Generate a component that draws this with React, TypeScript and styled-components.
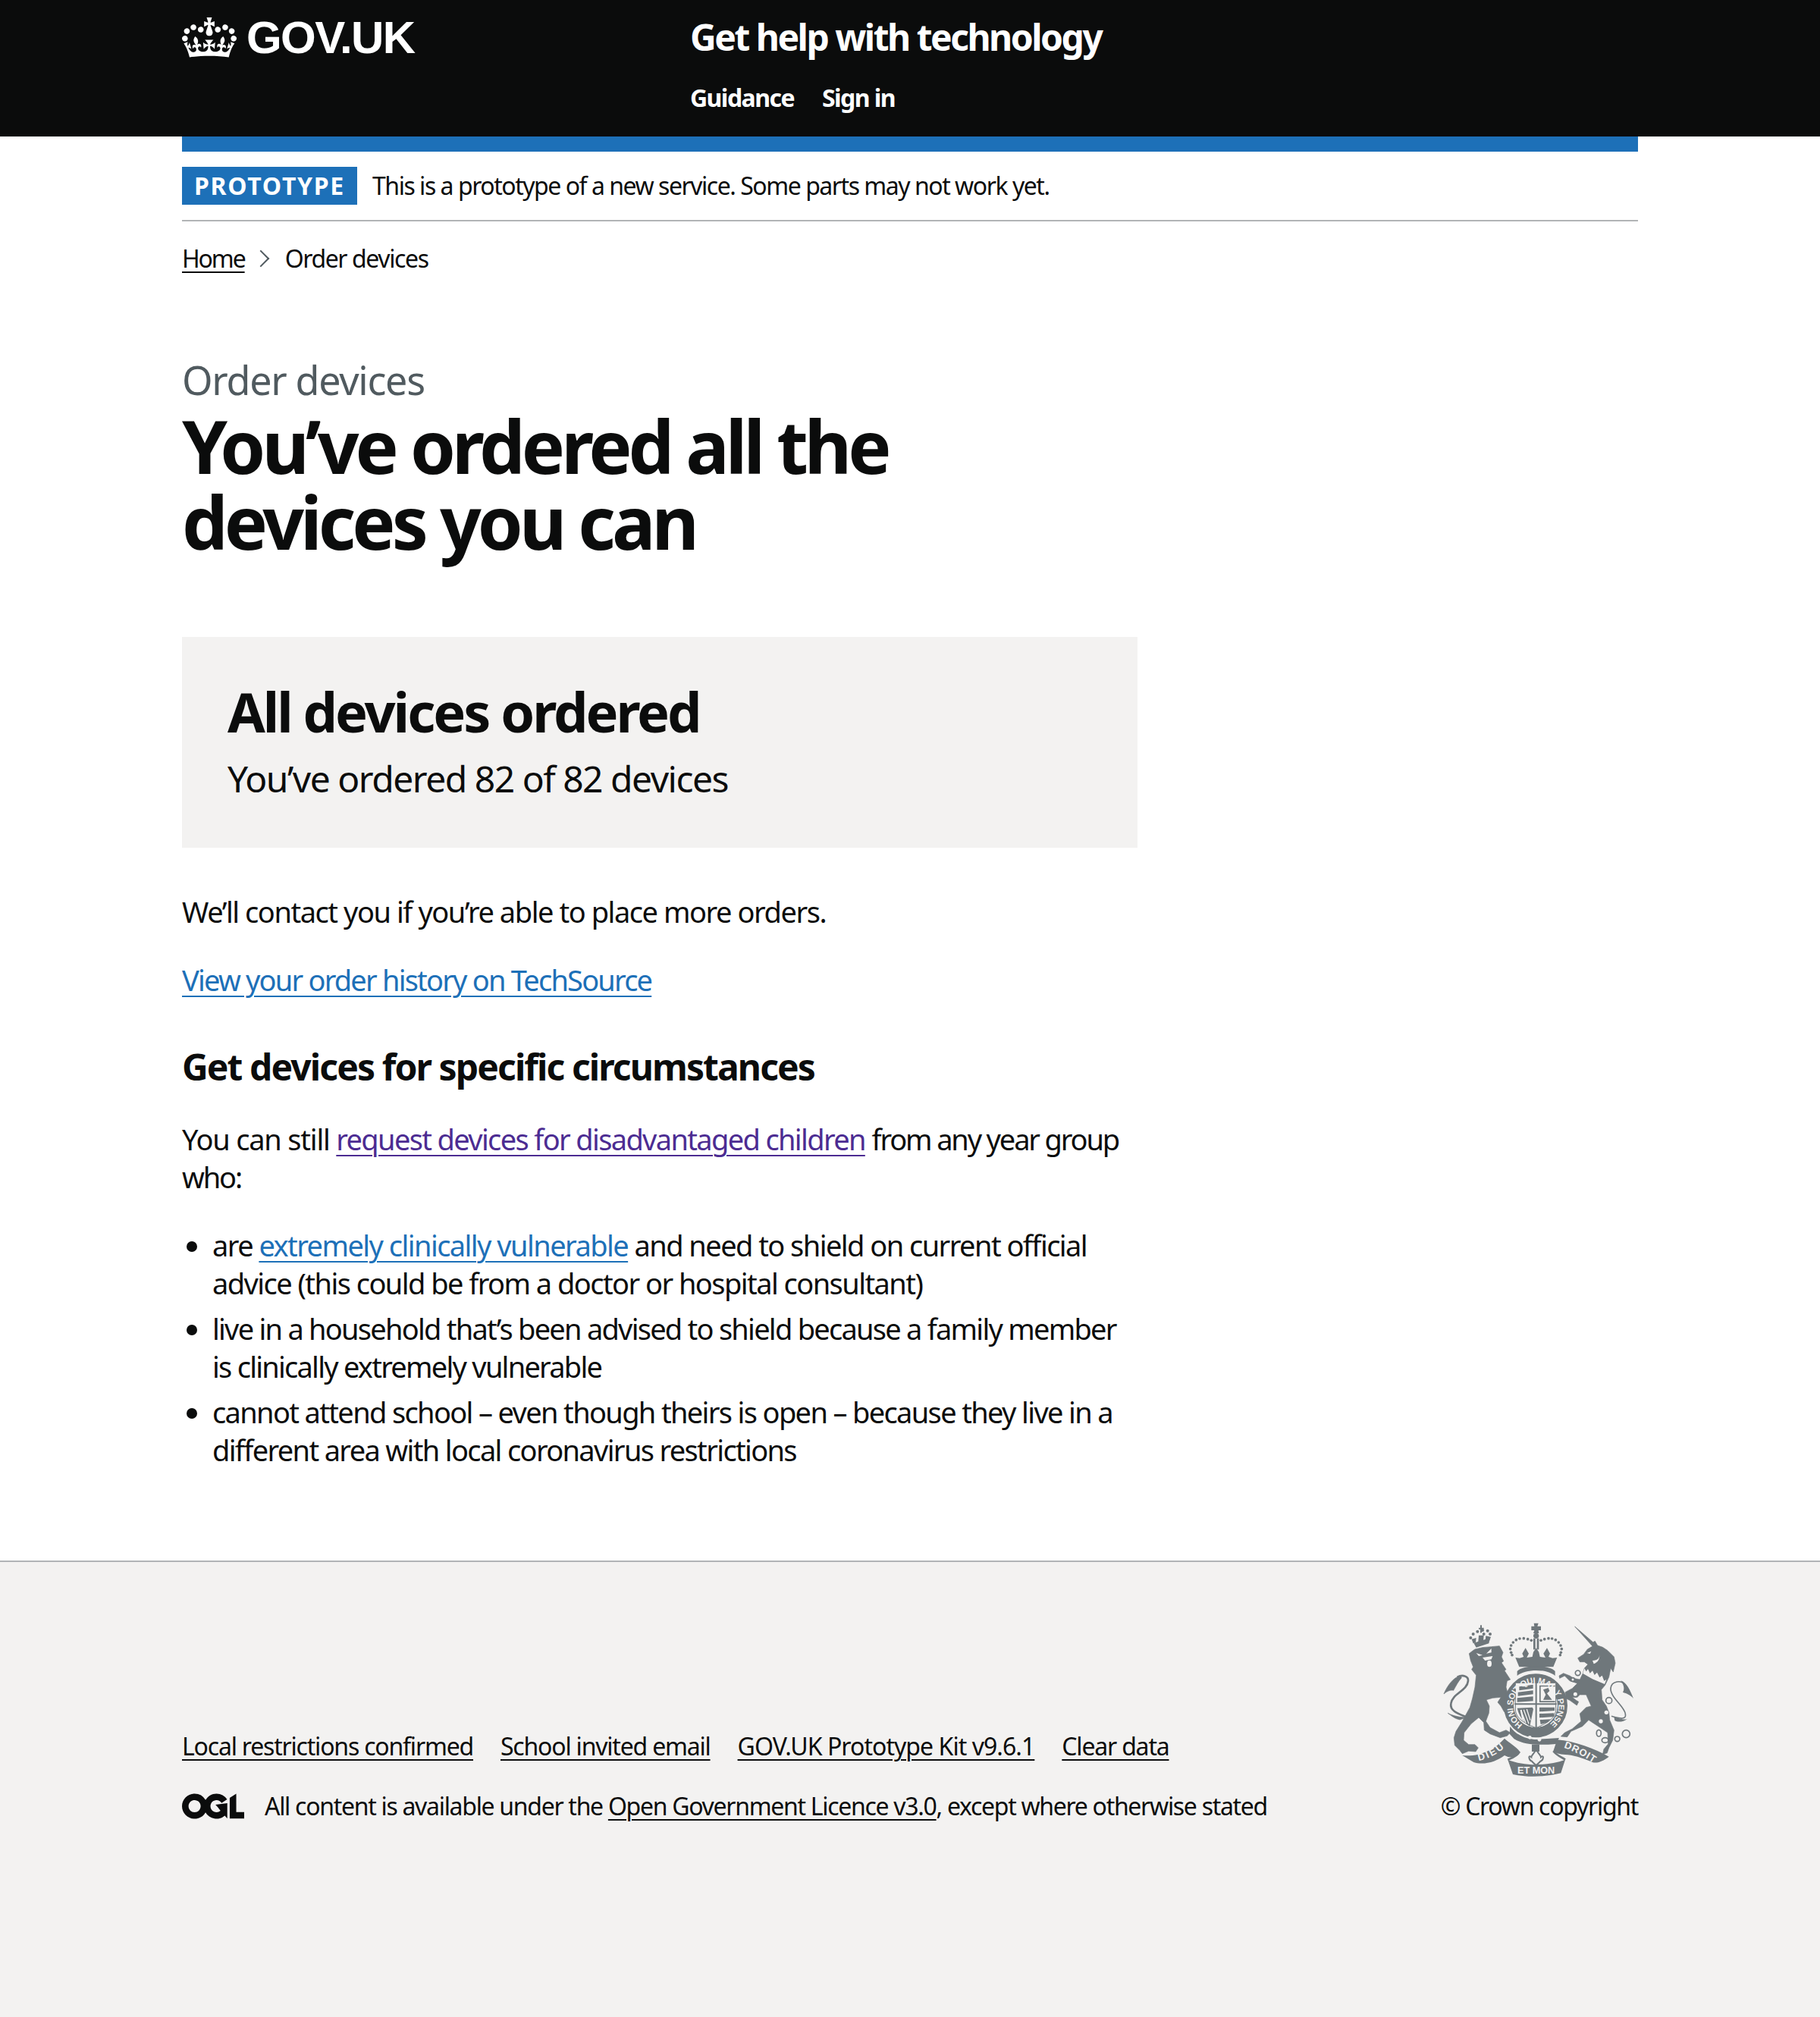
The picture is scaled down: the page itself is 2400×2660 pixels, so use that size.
import React from "react";
import styled, { createGlobalStyle } from "styled-components";

const Global = createGlobalStyle`
  html, body { margin: 0; padding: 0; height: 100%; }
  body { font-family: "Noto Sans", Arial, sans-serif; color: #0b0c0c; background: #fff; }
  #root { min-height: 100%; display: flex; flex-direction: column; }
`;
const Page = styled.div`display:flex;flex-direction:column;min-height:2660px;width:100%;`;
const Header = styled.header`background:#0b0c0c;height:180px;`;
const Wrap = styled.div`width:1920px;margin:0 auto;`;
const HeaderInner = styled(Wrap)`display:flex;`;
const LogoCol = styled.div`width:670px;height:100px;display:flex;align-items:center;gap:13px;padding-bottom:2px;box-sizing:border-box;`;
const Logotype = styled.span`font:bold 60px "Liberation Sans",Arial,sans-serif;color:#fff;letter-spacing:-1.6px;`;
const ServiceCol = styled.div`display:flex;flex-direction:column;`;
const ServiceName = styled.div`font-size:48px;font-weight:700;line-height:98px;color:#fff;letter-spacing:-2.5px;`;
const Nav = styled.nav`display:flex;gap:37px;font-size:32px;font-weight:700;line-height:62px;color:#fff;letter-spacing:-1.55px;`;
const Phase = styled(Wrap)`border-bottom:2px solid #b1b4b6;`;
const BlueBar = styled.div`height:20px;background:#1d70b8;`;
const PhaseRow = styled.div`display:flex;align-items:center;gap:20px;padding:20px 0;`;
const Tag = styled.strong`background:#1d70b8;color:#fff;font-size:32px;font-weight:700;letter-spacing:1.7px;width:231px;height:50px;line-height:50px;text-align:center;`;
const PhaseText = styled.span`font-size:32px;line-height:50px;letter-spacing:-1.47px;`;
const Crumbs = styled.nav`display:flex;align-items:center;margin-top:29px;font-size:32px;line-height:40px;letter-spacing:-1.4px;`;
const CrumbLink = styled.a`color:#0b0c0c;letter-spacing:-2.1px;text-decoration:underline;text-decoration-thickness:2px;text-underline-offset:5px;`;
const Chevron = styled.span`display:inline-block;width:14px;height:14px;border-top:2px solid #505a5f;border-right:2px solid #505a5f;transform:rotate(45deg);margin:0 24px 0 13px;`;
const Main = styled.main`padding-top:110px;padding-bottom:121px;`;
const Caption = styled.div`font-size:52px;line-height:60px;color:#505a5f;letter-spacing:-1.3px;margin-bottom:7px;`;
const H1 = styled.h1`margin:0 0 102px;font-size:96px;line-height:100px;font-weight:700;width:1240px;letter-spacing:-4.95px;`;
const Panel = styled.section`width:1260px;height:278px;box-sizing:border-box;background:#f3f2f1;padding:58px 60px 0;margin-bottom:59px;`;
const PanelTitle = styled.div`font-size:72px;line-height:80px;font-weight:700;letter-spacing:-3px;margin-bottom:19px;`;
const PanelSub = styled.div`font-size:48px;line-height:60px;letter-spacing:-1.5px;`;
const Column = styled.div`width:1260px;`;
const P = styled.p<{ $ls?: string }>`margin:0 0 40px;font-size:38px;line-height:50px;letter-spacing:${(p) => p.$ls || "-1.65px"};`;
const Link = styled.a<{ $c?: string }>`color:${(p) => p.$c || "#1d70b8"};text-decoration:underline;text-decoration-thickness:2px;text-underline-offset:6px;`;
const PurpleLink = styled(Link)`letter-spacing:-1.65px;`;
const Trailing = styled.span`letter-spacing:-2.15px;`;
const H2 = styled.h2`margin:60px 0 40px;font-size:48px;line-height:60px;font-weight:700;letter-spacing:-1.9px;`;
const List = styled.ul`margin:0;padding:0 0 0 40px;font-size:38px;line-height:50px;`;
const Item = styled.li<{ $ls: string }>`margin-bottom:10px;letter-spacing:${(p) => p.$ls};&:last-child{margin-bottom:0;}`;
const Footer = styled.footer`flex:1;background:#f3f2f1;border-top:2px solid #b1b4b6;`;
const FooterInner = styled(Wrap)`display:flex;justify-content:space-between;align-items:flex-end;padding-top:75px;`;
const FooterLeft = styled.div`display:flex;flex-direction:column;gap:39px;`;
const FooterLinks = styled.div`display:flex;gap:36px;font-size:32px;line-height:40px;letter-spacing:-1.2px;`;
const FooterLink = styled.a<{ $ls?: string }>`color:#0b0c0c;text-decoration:underline;text-decoration-thickness:2px;text-underline-offset:5px;${(p) => (p.$ls ? `letter-spacing:${p.$ls};` : "")}`;
const Licence = styled.div`display:flex;align-items:center;gap:27px;font-size:32px;line-height:40px;letter-spacing:-1.3px;`;
const CrestCol = styled.div`display:flex;flex-direction:column;align-items:flex-end;`;
const Copyright = styled.div`font-size:32px;line-height:40px;letter-spacing:-1.3px;margin-top:15px;`;
const CrestSvg = styled.svg`display:block;`;
const Ogl = styled.svg`display:block;`;

const G = "#6f777b";
const BG = "#f3f2f1";

function Crest() {
  return (
    <CrestSvg width={260} height={212} viewBox="1900 2135 260 212" aria-hidden>
      <defs>
        <path id="garter" d="M2008 2274.6 A30 30 0 1 1 2042 2274.6" />
        <path id="dieuPath" d="M1950 2322 C1962 2320 1975 2313 1986 2303" />
        <path id="droitPath" d="M2062 2305 C2075 2309 2090 2317 2103 2326" />
      </defs>
      {/* lion */}
      <g transform="translate(1900 2170) scale(.3333)" fill={G} stroke={G} strokeWidth="2" strokeLinejoin="round">
        <path d="M112 32 L125 22 L135 15 L165 8 L200 5 L232 2 L246 28 L240 45 L248 62 L240 68 L258 95 L252 100 L275 135 L262 140 L258 165 L270 210 L282 250 L270 265 L250 262 L238 240 L225 225 L238 205 L205 208 L180 215 L192 240 L190 268 L178 300 L195 325 L232 345 L258 335 L275 345 L262 358 L235 365 L195 350 L172 335 L170 305 L150 285 L120 310 L92 345 L90 375 L110 392 L135 392 L148 405 L138 420 L110 418 L85 428 L75 415 L55 395 L52 365 L60 340 L85 300 L115 245 L125 210 L135 165 L140 118 L122 95 L128 85 L118 60 Z" />
        <path d="M105 285 C70 270 35 260 40 230 C45 190 105 180 108 140 C110 120 85 115 65 125" fill="none" strokeWidth="8" />
        <path d="M78 120 C50 125 25 160 12 192 C25 180 40 175 50 178 C60 160 70 140 82 128 Z" />
        <path d="M100 285 C80 285 50 280 28 268 C45 280 55 290 75 294 Z" />
        <g fill={BG} stroke="none">
          <path d="M140 30 L165 38 L150 42 Z M200 12 L180 32 L200 28 Z" />
          <ellipse cx="192" cy="72" rx="9" ry="13" />
          <path d="M165 48 L205 42 L200 55 L175 60 Z" />
        </g>
        <g strokeWidth="0">
          <path d="M130 -10 L195 -30 L190 -8 L140 8 Z" />
          {[[118,-30],[128,-45],[145,-55],[165,-60],[185,-58],[195,-45],[170,-45]].map(([x,y],i)=>(<circle key={i} cx={x} cy={y} r="6" />))}
          <path d="M150 -70 h6 v-10 h6 v10 h8 v6 h-8 v14 h-6 v-14 h-6z" />
          <path d="M122 -25 L140 -30 L138 -12 L128 -8 Z M150 -40 L170 -40 L168 -18 L148 -14 Z M178 -38 L198 -34 L192 -18 L176 -20 Z" />
        </g>
      </g>
      {/* crown + shield */}
      <g transform="translate(1980 2130) scale(.3333)">
        <path d="M128 32 H146 L142 44 H156 V60 H146 L148 72 H126 L130 60 H118 V44 H130 Z" fill={G} />
        <circle cx="137" cy="82" r="11" fill={G} />
        <rect x="126" y="92" width="8" height="44" fill={G} />
        <rect x="140" y="92" width="8" height="44" fill={G} />
        {[[118,100],[104,95],[88,92],[72,93],[58,98],[46,108],[38,120],[35,134],[38,148],[42,158],[156,100],[170,95],[186,92],[200,93],[214,98],[226,108],[234,120],[238,134],[235,148],[232,158]].map(([x,y],i)=>(<circle key={i} cx={x} cy={y} r="5.5" fill={G} />))}
        <path d="M55 168 L72 170 L88 165 L82 152 L95 130 L108 152 L100 168 L122 165 L126 146 L137 130 L148 146 L152 165 L174 168 L166 152 L180 130 L192 152 L186 165 L202 170 L220 168 L205 205 L70 205 Z" fill={G} />
        <path d="M62 222 C85 195 190 195 212 222 L212 240 C180 212 95 212 62 240 Z" fill={G} />
        <circle cx="135" cy="358" r="106" fill="none" stroke={G} strokeWidth="40" />
        <circle cx="135" cy="358" r="86" fill={BG} />
        <path d="M55 268 H215 V372 C215 412 170 432 137 446 C100 432 55 412 55 372 Z" fill={BG} stroke={G} strokeWidth="3" />
        <path d="M137 262 V448 M52 352 H218" stroke={G} strokeWidth="6" fill="none" />
        <g fill={G}>
          <path d="M70 283 L125 275 V290 L70 298 Z M65 305 L125 298 V313 L65 320 Z M62 328 L125 322 V340 L62 344 Z" />
          <path d="M150 278 L212 278 V283 L155 283 V340 L212 340 V345 L150 345 Z" />
          <path d="M165 295 L185 288 L190 300 L180 310 L200 335 L165 335 L175 315 Z" />
          <path d="M150 365 L210 365 V378 L150 382 Z M150 390 L208 388 V402 L150 406 Z M152 414 L195 412 L180 425 L155 432 Z" />
          <path d="M62 368 L122 365 L126 372 L112 440 C96 428 72 410 62 368 Z M74 376 L82 415 L90 420 L80 374 Z" />
        </g>
        <path d="M76 376 L96 426 M88 374 L108 430 M100 372 L114 416" stroke={BG} strokeWidth="4" />
        <path d="M34 440 C60 480 110 492 137 492 L228 486 L215 510 C150 515 90 515 50 490 L32 470 Z" fill={G} />
        <circle cx="112" cy="484" r="7" fill={BG} />
        <circle cx="150" cy="493" r="7" fill={BG} />
        <rect x="120" y="512" width="30" height="28" fill={G} />
        <path d="M137 534 C125 550 118 556 118 562 C104 550 108 576 120 578 C126 586 132 590 137 594 C142 590 148 586 154 578 C166 576 170 550 156 562 C156 556 149 550 137 534 Z" fill="none" stroke={G} strokeWidth="6" />
      </g>
      <text fontFamily="Liberation Sans, Arial, sans-serif" fontWeight="700" fontSize="11" fill={BG}>
        <textPath href="#garter" textLength="150" lengthAdjust="spacing">HONI SOIT QUI MAL Y PENSE</textPath>
      </text>
      {/* unicorn */}
      <g transform="translate(2050 2135) scale(.3333)">
        <path fill={G} stroke={G} strokeWidth="2" strokeLinejoin="round" d="M80 30 L152 92 L160 88 L170 105 L190 112 L210 125 L235 150 L240 175 L232 210 L222 195 L215 230 L200 262 L185 280 L188 320 L205 345 L215 370 L218 400 L235 440 L230 480 L215 510 L208 530 L190 537 L195 515 L212 495 L210 450 L180 430 L150 410 L135 400 L110 425 L65 445 L50 467 L25 465 L40 450 L70 435 L105 405 L100 375 L125 350 L145 345 L125 300 L100 300 L90 310 L70 310 L85 322 L95 328 L88 342 L60 322 L45 315 L42 290 L70 275 L90 255 L60 245 L40 225 L20 235 L18 225 L35 215 L60 225 L75 235 L100 240 L112 215 L118 195 L132 180 L118 170 L100 170 L92 155 L115 140 L130 120 L150 108 Z" />
        <path d="M118 196 L125 208 L132 198 L140 215 L150 205 L158 222 L168 212 L178 232 L188 224 L196 245 L205 240 L198 258 L150 238 L112 216 Z" fill={BG} />
        <path d="M150 165 C170 165 178 155 178 142 C178 160 172 172 155 178 Z" fill={BG} />
        <path d="M128 135 L145 128 L140 138 Z" fill={BG} />
        <circle cx="205" cy="370" r="8" fill={BG} />
        <circle cx="183" cy="405" r="8" fill={BG} />
        <g fill="none" stroke={G} strokeWidth="5">
          <path d="M225 385 C260 395 285 400 280 375 C275 345 220 310 222 275 C225 245 265 240 278 262" />
          <circle cx="92" cy="214" r="10" fill={BG} />
          <circle cx="72" cy="240" r="7" fill={BG} />
          <circle cx="82" cy="298" r="10" fill={BG} />
          <ellipse cx="175" cy="452" rx="9" ry="13" />
          <ellipse cx="200" cy="480" rx="13" ry="10" />
          <circle cx="248" cy="475" r="10" />
          <circle cx="283" cy="455" r="15" />
        </g>
        <circle cx="215" cy="323" r="12" fill={BG} stroke={G} strokeWidth="5" />
        <path d="M262 244 C285 250 300 285 312 315 C300 300 285 295 270 290 C280 275 270 255 262 244 Z" fill={G} />
        <path d="M235 388 C260 395 275 402 288 395 C272 408 250 410 238 402 Z" fill={G} />
      </g>
      {/* scrolls */}
      <g transform="translate(1860 2110) scale(.3333)" fill={G}>
        <path d="M205 615 C275 622 335 590 372 548 C385 562 420 580 432 600 C425 625 395 628 372 615 C340 640 290 655 250 642 Z" />
        <path d="M385 632 C450 658 540 658 612 632 L595 685 C530 702 460 702 405 690 Z" />
        <path d="M580 553 C650 558 730 590 785 620 C760 640 730 650 715 640 C680 625 640 612 612 612 C590 612 570 605 565 598 Z" />
        <path d="M432 600 C420 620 400 625 385 632 M565 598 C580 618 600 622 612 632" fill="none" stroke={G} strokeWidth="8" />
        <text x="497" y="688" textAnchor="middle" fontFamily="Liberation Sans, Arial, sans-serif" fontWeight="700" fontSize="38" fill={BG}>ET MON</text>
      </g>
      <text fontFamily="Liberation Sans, Arial, sans-serif" fontWeight="700" fontSize="13" fill={BG}>
        <textPath href="#dieuPath" textLength="38" lengthAdjust="spacing">DIEU</textPath>
      </text>
      <text fontFamily="Liberation Sans, Arial, sans-serif" fontWeight="700" fontSize="13" fill={BG}>
        <textPath href="#droitPath" textLength="44" lengthAdjust="spacing">DROIT</textPath>
      </text>
    </CrestSvg>
  );
}

export default function App() {
  return (
    <Page>
      <Global />
      <Header>
        <HeaderInner>
          <LogoCol>
            <svg width="72" height="53" viewBox="0 0 132 97" aria-hidden>
              <path fill="#fff" fillRule="evenodd" d="M25 30.2c3.5 1.5 7.7-.2 9.1-3.7 1.5-3.6-.2-7.8-3.9-9.2-3.6-1.4-7.6.3-9.1 3.9-1.4 3.5.3 7.5 3.9 9zM9 39.5c3.6 1.5 7.8-.2 9.2-3.7 1.5-3.6-.2-7.8-3.9-9.1-3.6-1.5-7.6.2-9.1 3.8-1.4 3.5.3 7.5 3.8 9zM4.4 57.2c3.5 1.5 7.7-.2 9.1-3.8 1.5-3.6-.2-7.7-3.9-9.1-3.5-1.5-7.6.3-9.1 3.8-1.4 3.5.3 7.6 3.9 9.1zm38.3-21.4c3.5 1.5 7.7-.2 9.1-3.8 1.5-3.6-.2-7.7-3.9-9.1-3.6-1.5-7.6.3-9.1 3.8-1.3 3.6.4 7.7 3.9 9.1zm64.4-5.6c-3.6 1.5-7.8-.2-9.1-3.7-1.5-3.6.2-7.8 3.8-9.2 3.6-1.4 7.7.3 9.2 3.9 1.3 3.5-.4 7.5-3.9 9zm15.9 9.3c-3.6 1.5-7.7-.2-9.1-3.7-1.5-3.6.2-7.8 3.7-9.1 3.6-1.5 7.7.2 9.2 3.8 1.5 3.5-.3 7.5-3.8 9zm4.7 17.7c-3.6 1.5-7.8-.2-9.2-3.8-1.5-3.6.2-7.7 3.9-9.1 3.6-1.5 7.7.3 9.2 3.8 1.3 3.5-.4 7.6-3.9 9.1zM89.3 35.8c-3.6 1.5-7.8-.2-9.2-3.8-1.4-3.6.2-7.7 3.9-9.1 3.6-1.5 7.7.3 9.2 3.8 1.4 3.6-.3 7.7-3.9 9.1zM69.7 17.7l8.9 4.7V9.3l-8.9 2.8c-.2-.3-.5-.6-.9-.9L72.4 0H59.6l3.6 11.2c-.3.3-.6.5-.9.9l-8.8-2.8v13.1l8.8-4.7c.3.3.6.7.9.9l-5 15.4v.1c-.2.8-.4 1.6-.4 2.4 0 4.1 3.1 7.5 7 8.1h.2c.3 0 .7.1 1 .1.4 0 .7 0 1-.1h.2c4-.6 7.1-4.1 7.1-8.1 0-.8-.1-1.7-.4-2.4V34l-5.1-15.4c.4-.2.7-.6 1-.9zM66 92.8c16.9 0 32.8 1.1 47.1 3.2 4-16.9 8.9-26.7 14-33.5l-9.6-3.4c1 4.9 1.1 7.2 0 10.2-1.5-1.4-3-4.3-4.2-8.7L108.6 76c2.8-2 5-3.2 7.5-3.3-4.4 9.4-10 11.9-13.6 11.2-4.3-.8-6.3-4.6-5.6-7.9 1-4.7 5.7-5.9 8-.5 4.3-8.7-3-11.4-7.6-8.8 7.1-7.2 7.9-13.5 2.1-21.1-8 6.1-8.1 12.3-4.5 20.8-4.7-5.4-12.1-2.5-9.5 6.2 3.4-5.2 7.9-2 7.2 3.1-.6 4.3-6.4 7.8-13.5 7.2-10.3-.9-10.9-8-11.2-13.8 2.5-.5 7.1 1.8 11 7.3L80.2 60c-4.1 4.4-8 5.3-12.3 5.4 1.4-4.4 8-11.6 8-11.6H55.5s6.4 7.2 7.9 11.6c-4.2-.1-8-1-12.3-5.4l1.4 16.4c3.9-5.5 8.5-7.7 10.9-7.3-.3 5.8-.9 12.8-11.1 13.8-7.2.6-12.9-2.9-13.5-7.2-.7-5 3.8-8.3 7.1-3.1 2.7-8.7-4.6-11.6-9.4-6.2 3.7-8.5 3.6-14.7-4.6-20.8-5.8 7.6-5 13.9 2.2 21.1-4.7-2.6-11.9.1-7.7 8.8 2.3-5.5 7.1-4.2 8.1.5.7 3.3-1.3 7.1-5.7 7.9-3.5.7-9-1.8-13.5-11.2 2.5.1 4.7 1.3 7.5 3.3l-4.7-15.4c-1.2 4.4-2.7 7.2-4.3 8.7-1.1-3-.9-5.3 0-10.2l-9.5 3.4c5 6.9 9.9 16.7 14 33.5 14.8-2.1 30.8-3.2 47.7-3.2z" />
            </svg>
            <Logotype>GOV.UK</Logotype>
          </LogoCol>
          <ServiceCol>
            <ServiceName>Get help with technology</ServiceName>
            <Nav><span>Guidance</span><span>Sign in</span></Nav>
          </ServiceCol>
        </HeaderInner>
      </Header>
      <Phase>
        <BlueBar />
        <PhaseRow>
          <Tag>PROTOTYPE</Tag>
          <PhaseText>This is a prototype of a new service. Some parts may not work yet.</PhaseText>
        </PhaseRow>
      </Phase>
      <Wrap>
        <Crumbs><CrumbLink>Home</CrumbLink><Chevron /><span>Order devices</span></Crumbs>
        <Main>
          <Caption>Order devices</Caption>
          <H1>You’ve ordered all the devices you can</H1>
          <Panel>
            <PanelTitle>All devices ordered</PanelTitle>
            <PanelSub>You’ve ordered 82 of 82 devices</PanelSub>
          </Panel>
          <Column>
            <P $ls="-1.45px">We’ll contact you if you’re able to place more orders.</P>
            <P $ls="-1.8px"><Link>View your order history on TechSource</Link></P>
            <H2>Get devices for specific circumstances</H2>
            <P $ls="-1.2px">You can still <PurpleLink $c="#4c2c92">request devices for disadvantaged children</PurpleLink> <Trailing>from any year group who:</Trailing></P>
            <List>
              <Item $ls="-1.55px">are <Link>extremely clinically vulnerable</Link> and need to shield on current official advice (this could be from a doctor or hospital consultant)</Item>
              <Item $ls="-1.75px">live in a household that’s been advised to shield because a family member is clinically extremely vulnerable</Item>
              <Item $ls="-1.65px">cannot attend school – even though theirs is open – because they live in a different area with local coronavirus restrictions</Item>
            </List>
          </Column>
        </Main>
      </Wrap>
      <Footer>
        <FooterInner>
          <FooterLeft>
            <FooterLinks>
              <FooterLink>Local restrictions confirmed</FooterLink>
              <FooterLink>School invited email</FooterLink>
              <FooterLink $ls="-.95px">GOV.UK Prototype Kit v9.6.1</FooterLink>
              <FooterLink>Clear data</FooterLink>
            </FooterLinks>
            <Licence>
              <Ogl width="82" height="34" viewBox="0 0 483.2 195.7" aria-hidden>
                <path fill="#0b0c0c" d="M421.5 142.8V.1l-50.7 32.3v161.1h112.4v-50.7zm-122.3-9.6A47.12 47.12 0 0 1 221 97.8c0-26 21.1-47.1 47.1-47.1 16.7 0 31.4 8.7 39.7 21.8l42.7-27.2A97.63 97.63 0 0 0 268.1 0c-36.5 0-68.3 20.1-85.1 49.7A98 98 0 0 0 97.8 0C43.9 0 0 43.9 0 97.8s43.9 97.8 97.8 97.8c36.5 0 68.3-20.1 85.1-49.7a97.76 97.76 0 0 0 149.6 25.4l19.4 22.1.1-119.1-91.9 11.5 19 21.6zM97.8 145c-26 0-47.1-21.1-47.1-47.1s21.1-47.1 47.1-47.1 47.2 21 47.2 47S123.8 145 97.8 145" />
              </Ogl>
              <span>All content is available under the <FooterLink>Open Government Licence v3.0</FooterLink>, except where otherwise stated</span>
            </Licence>
          </FooterLeft>
          <CrestCol>
            <Crest />
            <Copyright>© Crown copyright</Copyright>
          </CrestCol>
        </FooterInner>
      </Footer>
    </Page>
  );
}
